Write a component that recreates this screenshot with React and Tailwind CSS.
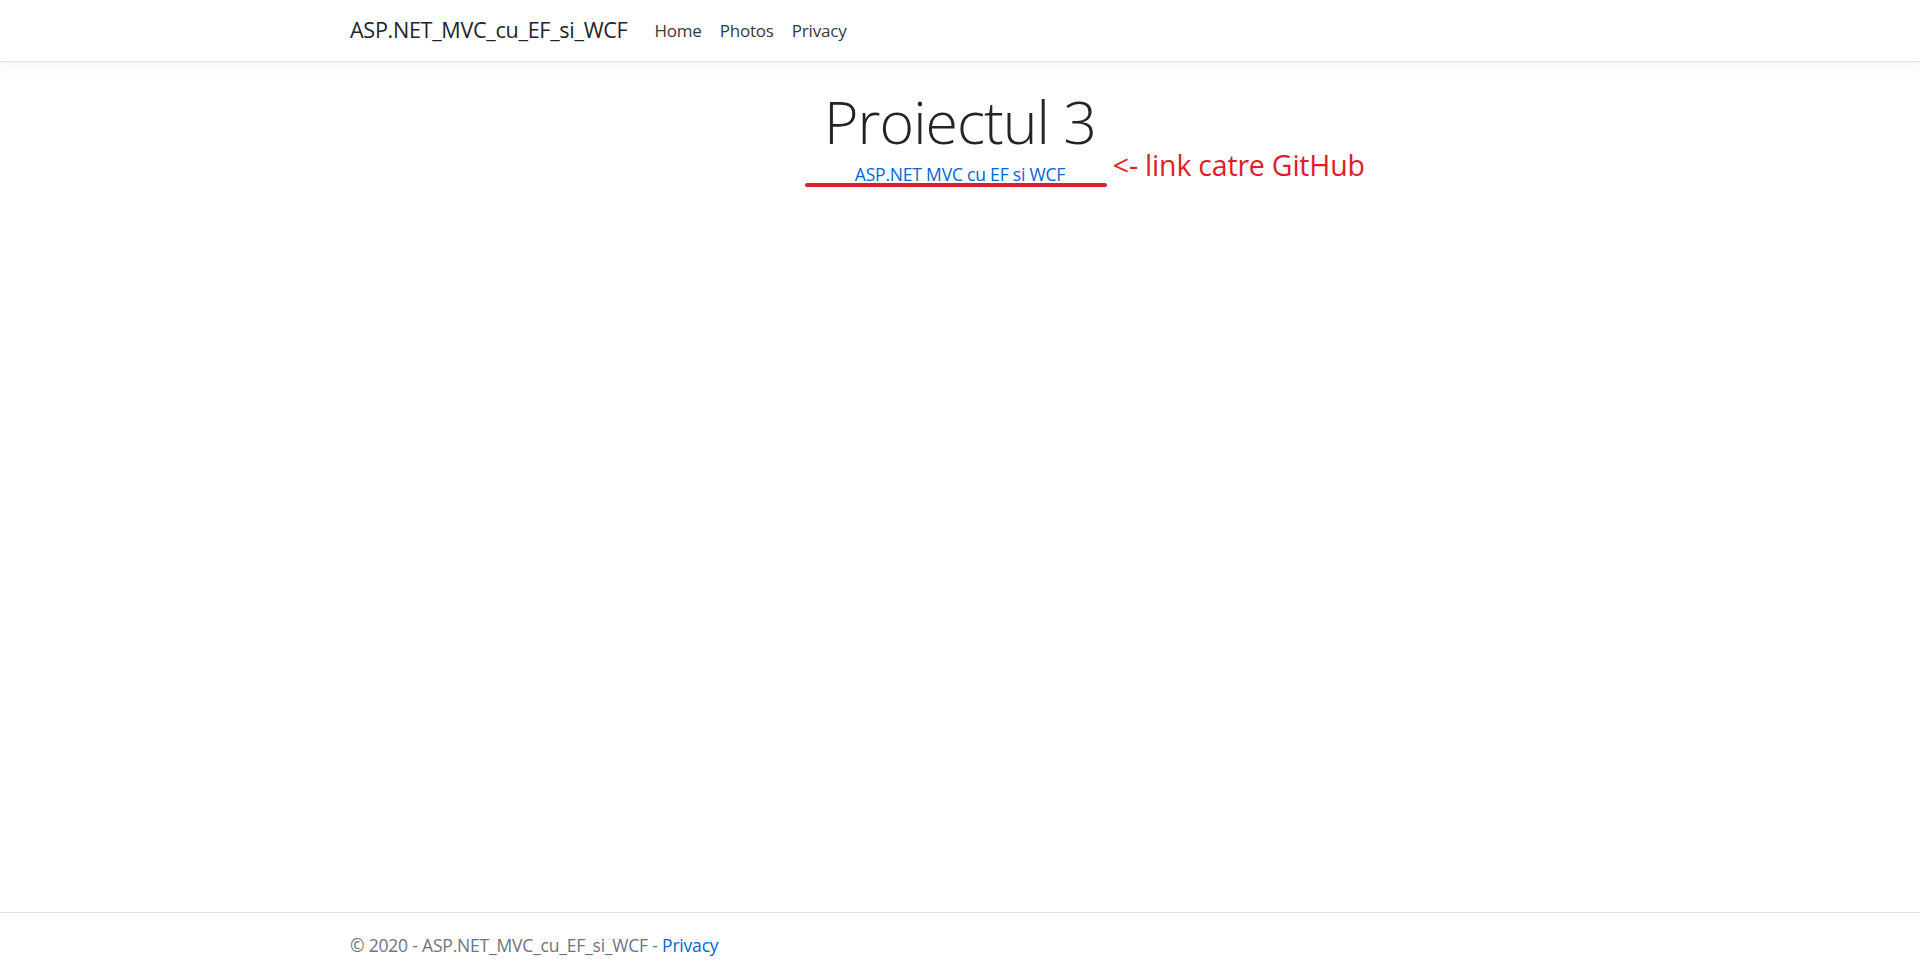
export default function App() {
  const font = { fontFamily: '"Open Sans", "Noto Sans", sans-serif' };
  return (
    <div className="min-h-[978px] flex flex-col bg-white" style={font}>
      <header className="h-[62px] border-b border-[#dee2e6] shadow-[0_4px_12px_rgba(0,0,0,0.05)] flex items-center pl-[350px]">
        <span className="text-[21.6px] text-[#212529] tracking-[-0.3px]">ASP.NET_MVC_cu_EF_si_WCF</span>
        <nav className="flex items-center gap-[18px] ml-[27px] text-[17px] text-[#343a40] tracking-[-0.2px]">
          <span>Home</span>
          <span>Photos</span>
          <span>Privacy</span>
        </nav>
      </header>
      <main className="flex-1 flex flex-col items-center pt-[24px]">
        <h1 className="text-[59px] font-light leading-[1.2] text-[#212529] tracking-[-1px]">Proiectul 3</h1>
        <div className="relative mt-[5px]">
          <span className="block text-[17.5px] text-[#0366d6] leading-[24px] tracking-[-0.2px]">ASP.NET MVC cu EF si WCF</span>
          <div className="absolute left-[-50px] right-[-42px] top-[21px] h-[4px] rounded-full bg-[#dc1f2a]"></div>
          <span className="absolute left-[258px] top-[-18px] whitespace-nowrap text-[28.5px] leading-[1.5] text-[#dc1f2a] tracking-[-0.2px]">&lt;- link catre GitHub</span>
        </div>
      </main>
      <footer className="h-[66px] border-t border-[#dee2e6] flex items-center pl-[350px] text-[17.5px] text-[#6c757d] tracking-[-0.2px]">
        <span>© 2020 - ASP.NET_MVC_cu_EF_si_WCF - <span className="text-[#0366d6]">Privacy</span></span>
      </footer>
    </div>
  );
}
